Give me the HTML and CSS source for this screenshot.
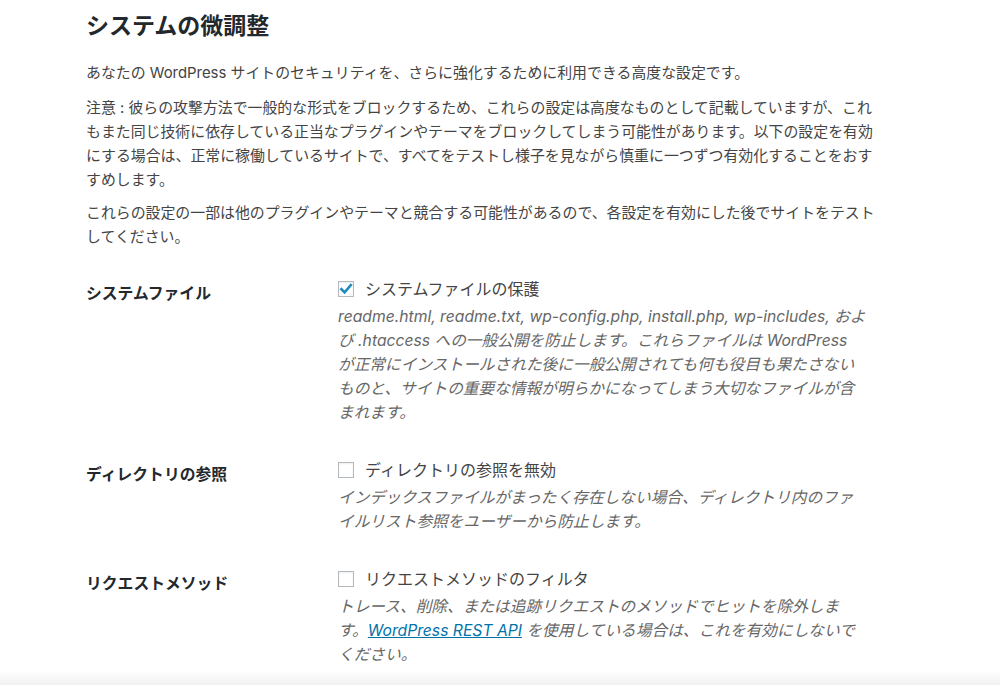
FILE: index.html
```html
<!DOCTYPE html>
<html lang="ja">
<head>
<meta charset="utf-8">
<link rel="stylesheet" href="styles.css">
</head>
<body>
<div class="wrap">
  <h1 class="title">システムの微調整</h1>
  <p class="intro">あなたの WordPress サイトのセキュリティを、さらに強化するために利用できる高度な設定です。</p>
  <p class="note">注意 : 彼らの攻撃方法で一般的な形式をブロックするため、これらの設定は高度なものとして記載していますが、これもまた同じ技術に依存している正当なプラグインやテーマをブロックしてしまう可能性があります。以下の設定を有効にする場合は、正常に稼働しているサイトで、すべてをテストし様子を見ながら慎重に一つずつ有効化することをおすすめします。</p>
  <p class="note2">これらの設定の一部は他のプラグインやテーマと競合する可能性があるので、各設定を有効にした後でサイトをテストしてください。</p>

  <div class="table">
    <div class="row">
      <div class="th">システムファイル</div>
      <div class="td">
        <label class="opt"><span class="box checked"><svg viewBox="0 0 16 16" width="16" height="16"><path d="M3.4 8.2 L6.6 11.4 L12.8 4.2" fill="none" stroke="#1e8cbe" stroke-width="2.6" stroke-linecap="square"/></svg></span>システムファイルの保護</label>
        <p class="desc">readme.html, readme.txt, wp-config.php, install.php, wp-includes, および .htaccess への一般公開を防止します。これらファイルは WordPress<br>が正常にインストールされた後に一般公開されても何も役目も果たさないものと、サイトの重要な情報が明らかになってしまう大切なファイルが含まれます。</p>
      </div>
    </div>
    <div class="row">
      <div class="th">ディレクトリの参照</div>
      <div class="td">
        <label class="opt"><span class="box"></span>ディレクトリの参照を無効</label>
        <p class="desc">インデックスファイルがまったく存在しない場合、ディレクトリ内のファイルリスト参照をユーザーから防止します。</p>
      </div>
    </div>
    <div class="row">
      <div class="th">リクエストメソッド</div>
      <div class="td">
        <label class="opt"><span class="box"></span>リクエストメソッドのフィルタ</label>
        <p class="desc">トレース、削除、または追跡リクエストのメソッドでヒットを除外します。<a class="link" href="#">WordPress REST API</a> を使用している場合は、これを有効にしないでください。</p>
      </div>
    </div>
  </div>
</div>
<div class="bottom-fade"></div>
</body>
</html>
```
FILE: styles.css
```css
html, body {
  margin: 0;
  padding: 0;
  background: #fff;
}
body {
  font-family: Inter, "Noto Sans CJK JP", sans-serif;
  color: #444;
  height: 685px;
  overflow: hidden;
  position: relative;
}
.wrap {
  padding: 11px 0 0 86px;
  width: 792px;
}
.title {
  margin: 0;
  font-size: 23px;
  line-height: 30px;
  font-weight: bold;
  color: #23282d;
}
.intro, .note, .note2 {
  font-size: 14.9px;
  line-height: 24px;
  margin: 0;
}
.intro { margin-top: 20px; }
.note { margin-top: 11px; }
.note2 { margin-top: 9px; }
.table {
  margin-top: 11px;
  display: flex;
  flex-direction: column;
}
.row {
  display: grid;
  grid-template-columns: 252px 530px;
  padding: 15px 0 16px;
}
.th {
  font-size: 15.8px;
  line-height: 24px;
  padding-top: 7px;
  font-weight: bold;
  color: #23282d;
}
.opt {
  display: flex;
  align-items: center;
  font-size: 16px;
  line-height: 28px;
  color: #444;
}
.box {
  width: 16px;
  height: 16px;
  box-sizing: border-box;
  border: 1px solid #b4b9be;
  background: #fff;
  box-shadow: inset 0 1px 2px rgba(0,0,0,0.07);
  margin-right: 11px;
  position: relative;
  flex: none;
}
.box svg {
  position: absolute;
  left: -1px;
  top: -1px;
}
.desc {
  margin: 2px 0 0;
  font-size: 15.7px;
  line-height: 24px;
  font-style: italic;
  color: #666;
}
.link {
  color: #0073aa;
  text-decoration: underline;
}
.bottom-fade {
  position: absolute;
  left: 0;
  right: 0;
  bottom: 0;
  height: 14px;
  background: linear-gradient(to bottom, rgba(241,241,241,0), #f1f1f1);
}
```
